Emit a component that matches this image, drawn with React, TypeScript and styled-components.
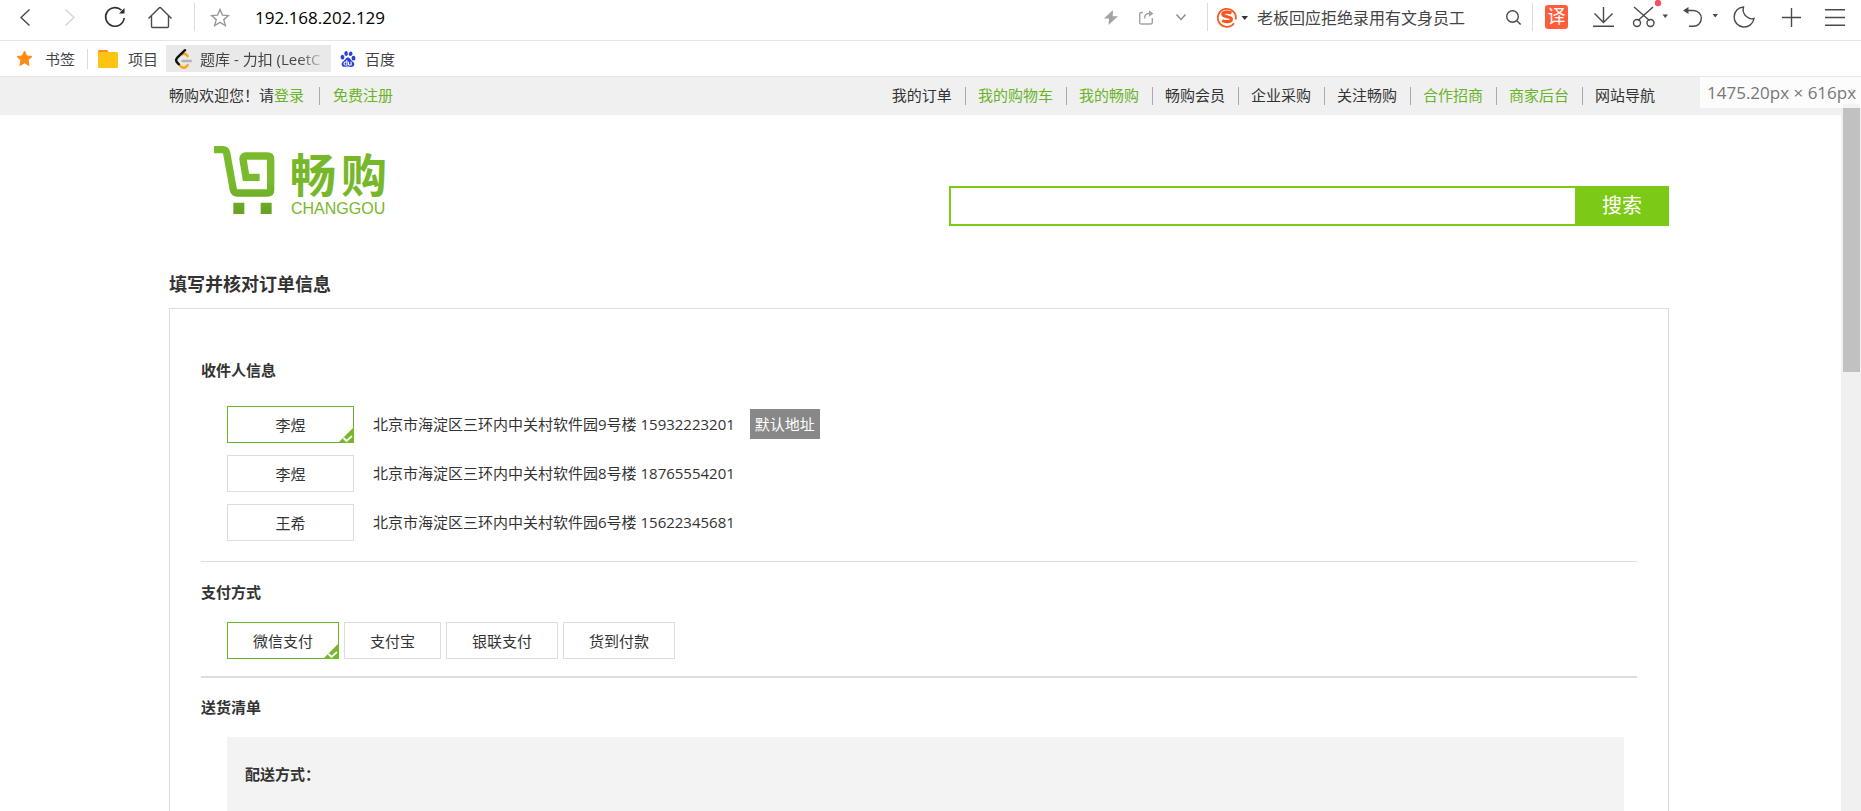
import React, { useState } from 'react';
import styled, { createGlobalStyle, css } from 'styled-components';
import { SiBaidu } from 'react-icons/si';

const green = '#69b327';
const brandGreen = '#76b82a';
const searchGreen = '#7cc916';
const line = '#dddddd';

const GlobalStyle = createGlobalStyle`
  *, *::before, *::after { box-sizing: border-box; }
  body {
    margin: 0;
    overflow: hidden;
    background: #fff;
    color: #333;
    font-family: 'Open Sans', 'Noto Sans CJK SC', sans-serif;
    font-size: 15px;
    line-height: 20px;
  }
  button, input { font: inherit; color: inherit; }
  button { cursor: pointer; }
  a { text-decoration: none; color: inherit; }
  h1, h2, h3, ul { margin: 0; padding: 0; }
  ul { list-style: none; }
`;

/* ---------- browser window ---------- */

const Window = styled.div`
  display: flex;
  flex-direction: column;
  height: 100vh;
`;

const Toolbar = styled.div`
  display: flex;
  align-items: center;
  flex: none;
  height: 41px;
  padding: 0 10px 6px 0;
  border-bottom: 1px solid #e6e6e6;
  color: #4a4a4a;
`;

const ToolButton = styled.button<{ $w: number; $color?: string }>`
  display: flex;
  align-items: center;
  justify-content: center;
  flex: none;
  width: ${(p) => p.$w}px;
  height: 34px;
  padding: 0;
  border: 0;
  background: none;
  color: ${(p) => p.$color ?? 'inherit'};
  svg { display: block; overflow: visible; }
`;

const Separator = styled.span<{ $before?: number; $after?: number; $h?: number }>`
  flex: none;
  width: 1px;
  height: ${(p) => p.$h ?? 28}px;
  margin: 0 ${(p) => p.$after ?? 0}px 0 ${(p) => p.$before ?? 0}px;
  background: #dcdcdc;
`;

const BarInput = styled.input<{ $url?: boolean }>`
  min-width: 0;
  height: 28px;
  border: 0;
  outline: 0;
  background: none;
  ${(p) =>
    p.$url
      ? css`
          flex: 1;
          padding: 0 0 0 24px;
          font-size: 17px;
          color: #000;
        `
      : css`
          flex: none;
          width: 247px;
          padding: 0 0 0 10px;
          font-size: 16px;
          color: #444;
        `}
`;

const TranslateTile = styled.span`
  width: 23px;
  height: 24px;
  border-radius: 3px;
  background: #ff5c3c;
  color: #fff;
  font-size: 18px;
  line-height: 22px;
  text-align: center;
`;

const Bookmarks = styled.nav`
  display: flex;
  align-items: center;
  flex: none;
  height: 36px;
  padding-left: 16px;
  border-bottom: 1px solid #e6e6e6;
  color: #444;
`;

const Bookmark = styled.a<{ $gap: number; $active?: boolean }>`
  display: flex;
  align-items: center;
  gap: ${(p) => p.$gap}px;
  height: 27px;
  svg { flex: none; display: block; }
  ${(p) =>
    p.$active &&
    css`
      width: 165px;
      margin: 0 9px 0 8px;
      padding: 0 4px 0 9px;
      background: #e9e9e9;
    `}
`;

const FadedLabel = styled.span`
  flex: 1;
  overflow: hidden;
  white-space: nowrap;
  mask-image: linear-gradient(to right, #000 78%, transparent 100%);
`;

/* ---------- viewport ---------- */

const Viewport = styled.div`
  display: flex;
  flex: 1;
  min-height: 0;
  position: relative;
`;

const Page = styled.div`
  flex: 1;
  min-width: 0;
  overflow: hidden;
`;

const ScrollTrack = styled.div`
  flex: none;
  width: 20px;
  padding: 11px 1px 0 2px;
  background: #f0f0f0;
`;

const ScrollArrow = styled.svg`
  display: block;
  margin: 0 auto 11px;
`;

const ScrollThumb = styled.div`
  height: 37%;
  background: #c1c1c1;
`;

const SizeTip = styled.div`
  position: absolute;
  top: 0;
  right: 0;
  width: 161px;
  height: 31px;
  padding-left: 7px;
  background: rgba(255, 255, 255, 0.8);
  color: #777;
  font-size: 17px;
  line-height: 31px;
  white-space: nowrap;
`;

const Container = styled.div`
  width: calc(100% - 80px);
  max-width: 1500px;
  margin: 0 auto;
`;

const Gutter = styled.div`
  padding-right: 3px;
`;

const TopBar = styled(Gutter)`
  background: #f0f0f0;
`;

const TopBarInner = styled(Container)`
  display: flex;
  align-items: center;
  justify-content: space-between;
  height: 38px;
`;

const TopList = styled.ul`
  display: flex;
  white-space: nowrap;
`;

const TopItem = styled.li<{ $green?: boolean }>`
  padding: 0 13px 2px 12px;
  line-height: 16px;
  color: ${(p) => (p.$green ? green : 'inherit')};
  & + & { border-left: 1px solid #aaa; }
  &:last-child { padding-right: 14px; }
`;

const WelcomeItem = styled(TopItem)`
  padding: 0 15px 2px 0;
  & + & { padding-left: 13px; }
`;

const GreenLink = styled.a`
  color: ${green};
`;

const Header = styled.header`
  display: flex;
  justify-content: space-between;
  align-items: flex-end;
  padding: 30px 0 43px 45px;
`;

const Logo = styled.a`
  display: flex;
  gap: 14px;
  align-self: flex-start;
  color: ${brandGreen};
  font-family: 'Liberation Sans', 'Noto Sans CJK SC', sans-serif;
`;

const Wordmark = styled.span`
  display: flex;
  flex-direction: column;
`;

const BrandName = styled.span`
  display: flex;
  gap: 5px;
  padding-top: 6px;
  font-size: 46px;
  font-weight: 700;
  line-height: 50px;
`;

const BrandLatin = styled.span`
  padding-left: 1px;
  font-size: 16px;
  line-height: 16px;
`;

const SearchForm = styled.form`
  display: flex;
  width: 720px;
  height: 40px;
  margin-top: 41px;
`;

const SearchInput = styled.input`
  flex: 1;
  min-width: 0;
  padding: 0 8px;
  border: 2px solid ${searchGreen};
  border-right: 0;
  outline: 0;
`;

const SearchButton = styled.button`
  width: 94px;
  padding: 0;
  border: 0;
  background: ${searchGreen};
  color: #fff;
  font-size: 20px;
`;

const PageTitle = styled.h1`
  margin-bottom: 9px;
  font-size: 18px;
  line-height: 30px;
`;

const Panel = styled.main`
  padding: 46px 31px 40px;
  border: 1px solid ${line};
`;

const Section = styled.section<{ $rule?: number; $top?: number; $bottom?: number }>`
  padding: ${(p) => p.$top ?? 0}px 0 ${(p) => p.$bottom ?? 0}px;
  border-bottom: ${(p) => p.$rule ?? 0}px solid ${line};
`;

const SectionTitle = styled.h2<{ $space: number }>`
  margin-bottom: ${(p) => p.$space}px;
  font-size: 15px;
  line-height: 30px;
`;

const AddressList = styled.ul`
  display: grid;
  gap: 12px;
  padding-left: 26px;
`;

const AddressRow = styled.li`
  display: flex;
  align-items: flex-start;
`;

const Choice = styled.button<{ $on: boolean; $wide?: boolean }>`
  position: relative;
  height: 37px;
  padding: 0 25px;
  ${(p) => p.$wide && 'width: 127px;'}
  border: 1px solid ${(p) => (p.$on ? green : line)};
  background: #fff;
  line-height: 20px;
`;

const Corner = styled.svg`
  position: absolute;
  right: -1px;
  bottom: -1px;
`;

const AddressText = styled.span`
  margin: 3px 15px 0 19px;
  line-height: 30px;
`;

const DefaultBadge = styled.span`
  margin-top: 3px;
  padding: 0 5px;
  background: #888;
  color: #fff;
  line-height: 30px;
`;

const PayRow = styled.div`
  display: flex;
  gap: 5px;
  padding-left: 26px;
`;

const DeliveryBox = styled.div`
  min-height: 200px;
  margin: 0 13px 0 26px;
  padding: 22px 18px;
  background: #f3f3f3;
`;

const DeliveryTitle = styled.h3`
  font-size: 15px;
  line-height: 30px;
`;

/* ---------- drawings ---------- */

const stroke = { fill: 'none', stroke: 'currentColor', strokeWidth: 1.4 };

const BackIcon = () => (
  <svg width="10" height="17" viewBox="0 0 10 17" {...stroke}><path d="M9.5.5 1 8.5l8.5 8" /></svg>
);
const ForwardIcon = () => (
  <svg width="10" height="17" viewBox="0 0 10 17" {...stroke}><path d="M.5.5 9 8.5l-8.500 8" /></svg>
);
const ReloadIcon = () => (
  <svg width="20" height="20" viewBox="0 0 20 20" {...stroke} strokeWidth={1.6}>
    <path d="M19.200 11A9.300 9.300 0 1 1 16.500 3.300" />
    <path d="M19.500 1v5.500H14z" fill="currentColor" stroke="none" />
  </svg>
);
const HomeIcon = () => (
  <svg width="24" height="21" viewBox="0 0 24 21" {...stroke}>
    <path d="M.5 11.500 10.800 1.200a1.700 1.700 0 0 1 2.400 0L23.500 11.500M3.500 9v10.300c0 .7.500 1.200 1.200 1.200h14.600c.7 0 1.200-.5 1.200-1.200V9" />
  </svg>
);
const StarIcon = () => (
  <svg width="20" height="19" viewBox="0 0 20 19" {...stroke}>
    <path d="m10 1.500 2.400 5.600 6 .5-4.600 4 1.500 5.900L10 14.300l-5.300 3.200 1.500-5.900-4.600-4 6-.5z" />
  </svg>
);
const BoltIcon = () => (
  <svg width="14" height="15" viewBox="0 0 14 15" fill="currentColor"><path d="M9 0 0 8.500h5L4.500 15 14 6.300H8.700z" /></svg>
);
const ShareIcon = () => (
  <svg width="15" height="15" viewBox="0 0 15 15" {...stroke}>
    <path d="M4 2.500H2.200A1.500 1.500 0 0 0 .7 4v8.500A1.500 1.500 0 0 0 2.200 14h9.600a1.500 1.500 0 0 0 1.500-1.500V8M5.500 8.500c0-3 1.500-5 5-5" />
    <path d="M10 .3v6.400l4.500-3.200z" fill="currentColor" stroke="none" />
  </svg>
);
const DownIcon = () => (
  <svg width="10" height="6" viewBox="0 0 10 6" {...stroke}><path d="m.5.500 4.500 5 4.500-5" /></svg>
);
const SogouIcon = () => (
  <svg width="31" height="20" viewBox="0 0 31 20">
    <path d="M17 16.300A9 9 0 1 1 18.700 12.500" fill="none" stroke="#fb5520" strokeWidth="1.800" />
    <path d="M14.500 6C11 4.600 5.800 4.800 5.800 7.300c0 3.200 8.600 1.600 8.600 4.900 0 2.800-5.700 3-9.200 1.400" fill="none" stroke="#fb5520" strokeWidth="3.200" />
    <path d="M24.500 9h6.500l-3.250 4z" fill="#333" />
  </svg>
);
const SearchIcon = () => (
  <svg width="15" height="15" viewBox="0 0 15 15" {...stroke}><circle cx="6.500" cy="6.500" r="5.800" /><path d="m10.600 10.600 4 4" /></svg>
);
const DownloadIcon = () => (
  <svg width="21" height="20" viewBox="0 0 21 20" {...stroke}><path d="M10.500 0v15.500M1.500 6.500l9 9 9-9M0 19.300h21" /></svg>
);
const ScissorsIcon = () => (
  <svg width="36" height="20" viewBox="0 0 36 20" {...stroke}>
    <path d="M1 0l15.500 13.500M20 0 5 13.500" />
    <circle cx="4" cy="16" r="3.500" /><circle cx="17.500" cy="16" r="3.500" />
    <circle cx="25" cy="-4" r="3.200" fill="#f4515c" stroke="none" />
    <path d="M29.500 7.500H35l-2.750 3.500z" fill="currentColor" stroke="none" />
  </svg>
);
const UndoIcon = () => (
  <svg width="35" height="20" viewBox="0 0 35 20" {...stroke}>
    <path d="M2 3.500h8.500a7.800 7.800 0 0 1 0 15.700H6" />
    <path d="M5.500 0v7L0 3.500z" fill="currentColor" stroke="none" />
    <path d="M29.500 7H35l-2.750 3.500z" fill="currentColor" stroke="none" />
  </svg>
);
const MoonIcon = () => (
  <svg width="22" height="22" viewBox="0 0 22 22" {...stroke}>
    <path d="M10.500 1A10 10 0 1 0 21 12.500C16 14 8.500 9 10.500 1z" />
  </svg>
);
const PlusIcon = () => (
  <svg width="19" height="19" viewBox="0 0 19 19" {...stroke}><path d="M9.500 0v19M0 9.500h19" /></svg>
);
const MenuIcon = () => (
  <svg width="20" height="17" viewBox="0 0 20 17" {...stroke}><path d="M0 .7h20M0 8.500h20M0 16.300h20" /></svg>
);
const OrangeStar = () => (
  <svg width="17" height="17" viewBox="0 0 17 17" fill="#ff8a12" stroke="#ff8a12" strokeLinejoin="round">
    <path d="m8.500 1 2.200 4.900 5.300.600-4 3.600 1.100 5.400-4.600-2.700-4.600 2.700L5 10.100 1 6.500l5.300-.600z" />
  </svg>
);
const FolderIcon = () => (
  <svg width="20" height="18" viewBox="0 0 20 18">
    <path d="M1.500 0H9l2 2.500V6H0V1.500A1.500 1.500 0 0 1 1.500 0z" fill="#ff8f1f" />
    <rect y="2" width="20" height="16" rx="1.500" fill="#ffc312" />
  </svg>
);
const LeetIcon = () => (
  <svg width="17" height="20" viewBox="0 0 17 20" fill="none" strokeWidth="2.400" strokeLinecap="round">
    <path d="M3.800 15.200 6 17.600c1.500 1.500 3.800 1.500 5.200 0l1.500-1.500M7.500 5.300l1-.5c1-.2 1.800 0 2.700.9l1.500 1.500" stroke="#ffa116" />
    <path d="M10 1.200 2.300 8.700c-1.400 1.500-1.400 3.400 0 4.900l1.500 1.600" stroke="#111" />
    <path d="M7.500 12h8.300" stroke="#b3b3b3" />
  </svg>
);

const CartMark = () => (
  <svg width="62" height="70" viewBox="160 225 186 210" aria-hidden="true">
    <defs>
      <linearGradient id="cart" gradientUnits="userSpaceOnUse" x1="0" y1="230" x2="0" y2="432">
        <stop offset="0.5" stopColor="#79bb2c" />
        <stop offset="1" stopColor="#68a125" />
      </linearGradient>
    </defs>
    <path
      d="M160 239H186Q196 239 198 249L218 359Q220 369 230 369H320Q330 369 330 359V268Q330 258 320 258H256Q246 258 247 268L256 322H297"
      fill="none"
      stroke="url(#cart)"
      strokeWidth="22"
    />
    <path d="M218 398h33v34h-33zM300 398h33v34h-33z" fill="url(#cart)" />
  </svg>
);

const SelectedCorner = () => (
  <Corner width="16" height="16" viewBox="0 0 16 16" aria-hidden="true">
    <path d="M16 0v16H0z" fill={brandGreen} />
    <path d="m5.500 11 3 3L14 9" fill="none" stroke="#fff" strokeWidth="1.800" />
  </Corner>
);

/* ---------- data ---------- */

const siteLinks = [
  { label: '我的订单' },
  { label: '我的购物车', green: true },
  { label: '我的畅购', green: true },
  { label: '畅购会员' },
  { label: '企业采购' },
  { label: '关注畅购' },
  { label: '合作招商', green: true },
  { label: '商家后台', green: true },
  { label: '网站导航' },
];

const addresses = [
  { name: '李煜', text: '北京市海淀区三环内中关村软件园9号楼 15932223201', isDefault: true },
  { name: '李煜', text: '北京市海淀区三环内中关村软件园8号楼 18765554201' },
  { name: '王希', text: '北京市海淀区三环内中关村软件园6号楼 15622345681' },
];

const payments = ['微信支付', '支付宝', '银联支付', '货到付款'];

export default function App() {
  const [address, setAddress] = useState(0);
  const [payment, setPayment] = useState(0);

  return (
    <Window>
      <GlobalStyle />
      <Toolbar>
        <ToolButton $w={50} aria-label="后退"><BackIcon /></ToolButton>
        <ToolButton $w={40} $color="#d4d4d4" aria-label="前进"><ForwardIcon /></ToolButton>
        <ToolButton $w={50} $color="#2b2b2b" aria-label="刷新"><ReloadIcon /></ToolButton>
        <ToolButton $w={40} aria-label="主页"><HomeIcon /></ToolButton>
        <Separator $before={14} $after={14} />
        <ToolButton $w={22} $color="#999" aria-label="收藏"><StarIcon /></ToolButton>
        <BarInput $url aria-label="地址" defaultValue="192.168.202.129" />
        <ToolButton $w={36} $color="#a3a3a3" aria-label="极速模式"><BoltIcon /></ToolButton>
        <ToolButton $w={35} $color="#a3a3a3" aria-label="分享"><ShareIcon /></ToolButton>
        <ToolButton $w={34} $color="#8a8a8a" aria-label="展开"><DownIcon /></ToolButton>
        <Separator $before={9} $after={9} />
        <ToolButton $w={30} aria-label="搜索引擎"><SogouIcon /></ToolButton>
        <BarInput aria-label="网页搜索" defaultValue="老板回应拒绝录用有文身员工" />
        <ToolButton $w={38} aria-label="搜索网页"><SearchIcon /></ToolButton>
        <Separator />
        <ToolButton $w={47}><TranslateTile>译</TranslateTile></ToolButton>
        <ToolButton $w={47} aria-label="下载"><DownloadIcon /></ToolButton>
        <ToolButton $w={48} aria-label="截图"><ScissorsIcon /></ToolButton>
        <ToolButton $w={50} aria-label="恢复"><UndoIcon /></ToolButton>
        <ToolButton $w={38} aria-label="夜间模式"><MoonIcon /></ToolButton>
        <ToolButton $w={56} aria-label="添加"><PlusIcon /></ToolButton>
        <ToolButton $w={32} aria-label="菜单"><MenuIcon /></ToolButton>
      </Toolbar>
      <Bookmarks>
        <Bookmark href="#" $gap={12}><OrangeStar />书签</Bookmark>
        <Separator $h={20} $before={12} $after={10} />
        <Bookmark href="#" $gap={10}><FolderIcon />项目</Bookmark>
        <Bookmark href="#" $gap={8} $active><LeetIcon /><FadedLabel>题库 - 力扣 (LeetC</FadedLabel></Bookmark>
        <Bookmark href="#" $gap={9}><SiBaidu size={16} color="#2a3fdc" />百度</Bookmark>
      </Bookmarks>

      <Viewport>
        <Page>
          <TopBar>
            <TopBarInner>
              <TopList>
                <WelcomeItem>畅购欢迎您！请<GreenLink href="#">登录</GreenLink></WelcomeItem>
                <WelcomeItem><GreenLink href="#">免费注册</GreenLink></WelcomeItem>
              </TopList>
              <TopList>
                {siteLinks.map((l) => (
                  <TopItem key={l.label} $green={l.green}><a href="#">{l.label}</a></TopItem>
                ))}
              </TopList>
            </TopBarInner>
          </TopBar>

          <Gutter>
            <Container>
              <Header>
                <Logo href="#">
                  <CartMark />
                  <Wordmark>
                    <BrandName><span>畅</span><span>购</span></BrandName>
                    <BrandLatin>CHANGGOU</BrandLatin>
                  </Wordmark>
                </Logo>
                <SearchForm onSubmit={(e) => e.preventDefault()}>
                  <SearchInput aria-label="搜索商品" />
                  <SearchButton>搜索</SearchButton>
                </SearchForm>
              </Header>

              <PageTitle>填写并核对订单信息</PageTitle>
              <Panel>
                <Section $rule={1} $bottom={20}>
                  <SectionTitle $space={21}>收件人信息</SectionTitle>
                  <AddressList>
                    {addresses.map((a, i) => (
                      <AddressRow key={a.text}>
                        <Choice $wide $on={address === i} aria-pressed={address === i} onClick={() => setAddress(i)}>
                          {a.name}
                          {address === i && <SelectedCorner />}
                        </Choice>
                        <AddressText>{a.text}</AddressText>
                        {a.isDefault && <DefaultBadge>默认地址</DefaultBadge>}
                      </AddressRow>
                    ))}
                  </AddressList>
                </Section>

                <Section $rule={2} $top={15} $bottom={17}>
                  <SectionTitle $space={15}>支付方式</SectionTitle>
                  <PayRow>
                    {payments.map((p, i) => (
                      <Choice key={p} $on={payment === i} aria-pressed={payment === i} onClick={() => setPayment(i)}>
                        {p}
                        {payment === i && <SelectedCorner />}
                      </Choice>
                    ))}
                  </PayRow>
                </Section>

                <Section $top={14}>
                  <SectionTitle $space={15}>送货清单</SectionTitle>
                  <DeliveryBox>
                    <DeliveryTitle>配送方式：</DeliveryTitle>
                  </DeliveryBox>
                </Section>
              </Panel>
            </Container>
          </Gutter>
        </Page>
        <ScrollTrack>
          <ScrollArrow width="8" height="5" viewBox="0 0 8 5"><path d="M4 0 8 5H0z" fill="#888" /></ScrollArrow>
          <ScrollThumb />
        </ScrollTrack>
        <SizeTip>1475.20px × 616px</SizeTip>
      </Viewport>
    </Window>
  );
}
